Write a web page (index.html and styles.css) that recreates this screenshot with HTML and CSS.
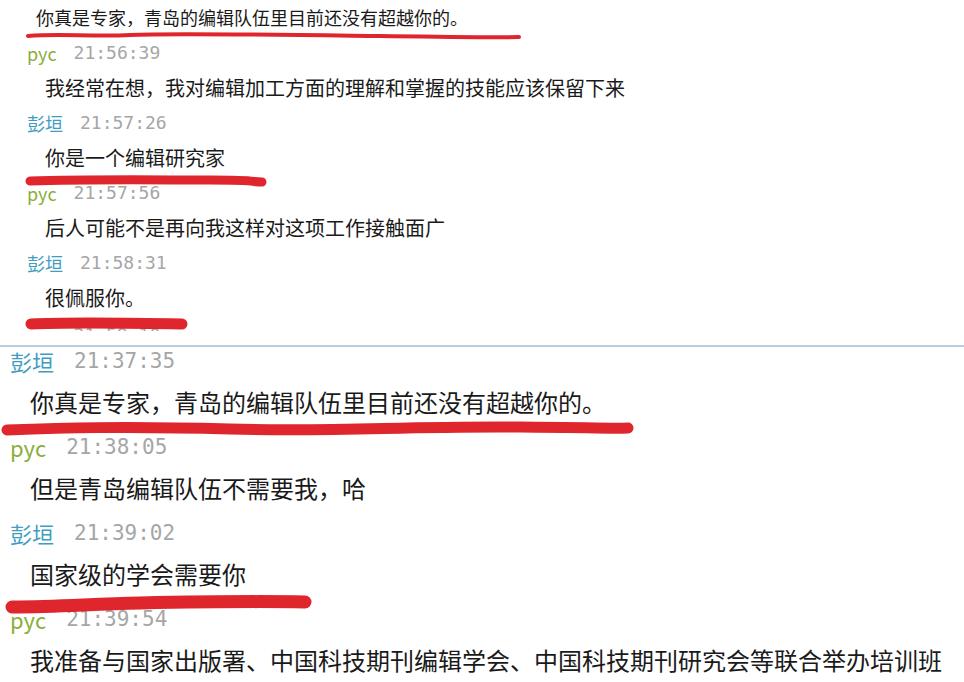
FILE: index.html
```html
<!DOCTYPE html>
<html lang="zh-CN">
<head>
    <meta charset="UTF-8">
    <title>聊天记录</title>
    <link rel="stylesheet" href="styles.css">
</head>
<body>
    <div class="page">
        <div class="log log-small">
            <p class="msg first">你真是专家，青岛的编辑队伍里目前还没有超越你的。</p>

            <div class="head"><span class="name pyc">pyc</span><span class="time">21:56:39</span></div>
            <p class="msg">我经常在想，我对编辑加工方面的理解和掌握的技能应该保留下来</p>

            <div class="head"><span class="name peng">彭垣</span><span class="time">21:57:26</span></div>
            <p class="msg">你是一个编辑研究家</p>

            <div class="head"><span class="name pyc">pyc</span><span class="time">21:57:56</span></div>
            <p class="msg">后人可能不是再向我这样对这项工作接触面广</p>

            <div class="head"><span class="name peng">彭垣</span><span class="time">21:58:31</span></div>
            <p class="msg">很佩服你。</p>

            <div class="cut">
                <div class="head"><span class="name pyc">pyc</span><span class="time">21:59:10</span></div>
            </div>
        </div>

        <div class="log log-large">
            <div class="head"><span class="name peng">彭垣</span><span class="time">21:37:35</span></div>
            <p class="msg">你真是专家，青岛的编辑队伍里目前还没有超越你的。</p>

            <div class="head"><span class="name pyc">pyc</span><span class="time">21:38:05</span></div>
            <p class="msg">但是青岛编辑队伍不需要我，哈</p>

            <div class="head"><span class="name peng">彭垣</span><span class="time">21:39:02</span></div>
            <p class="msg">国家级的学会需要你</p>

            <div class="head"><span class="name pyc">pyc</span><span class="time">21:39:54</span></div>
            <p class="msg">我准备与国家出版署、中国科技期刊编辑学会、中国科技期刊研究会等联合举办培训班</p>
        </div>

        <!-- red pen marks drawn over the screenshot -->
        <svg class="marks" width="964" height="682" viewBox="0 0 964 682">
            <path d="M28 36 C60 33 90 37 130 35 S300 35 380 36 S480 38 519 37" stroke-width="4"/>
            <path d="M30 181 C90 179 160 180 210 180 S250 182 262 182" stroke-width="9"/>
            <path d="M31 324 C70 322 120 323 182 324" stroke-width="11"/>
            <path d="M7 430 C60 428 120 426 230 429 S400 426 520 427 S600 429 628 428" stroke-width="11"/>
            <path d="M12 607 C60 607 90 604 140 603 S250 601 305 602" stroke-width="13"/>
        </svg>
    </div>
</body>
</html>
```

FILE: styles.css
```css
body {
    margin: 0;
    background: #fff;
    font-family: "Noto Sans CJK SC", "Microsoft YaHei", sans-serif;
    color: #1a1a1a;
}
.page {
    position: relative;
    width: 964px;
    height: 682px;
    overflow: hidden;
}
.log {
    display: flex;
    flex-direction: column;
}
.msg {
    margin: 0;
    white-space: nowrap;
}
.head {
    display: flex;
    align-items: center;
}
.name {
    font-family: "Noto Sans CJK SC", "Microsoft YaHei", sans-serif;
}
.pyc {
    color: #8cae3c;
}
.peng {
    color: #3f9ec0;
}
.time {
    font-family: "DejaVu Sans Mono", monospace;
    color: #a6a6a6;
}

/* upper, smaller capture */
.log-small {
    height: 345px;
    border-bottom: 2px solid #b9cce0;
    padding-left: 27px;
}
.log-small .msg {
    height: 35px;
    line-height: 35px;
    font-size: 20px;
    padding-left: 18px;
}
.log-small .msg.first {
    font-size: 18px;
    padding-left: 9px;
}
.log-small .head {
    height: 35px;
    font-size: 18px;
}
.log-small .time {
    font-size: 18px;
    margin-left: 17px;
}
.cut {
    height: 14px;
    overflow: hidden;
    padding-top: 2px;
}

/* lower, larger capture */
.log-large {
    padding-left: 10px;
}
.log-large .head {
    height: 28px;
    font-size: 22px;
}
.log-large .time {
    font-size: 21px;
    margin-left: 20px;
}
.log-large .msg {
    height: 54px;
    line-height: 54px;
    padding-bottom: 4px;
    padding-left: 20px;
    font-size: 24px;
}

.marks {
    position: absolute;
    left: 0;
    top: 0;
}
.marks path {
    fill: none;
    stroke: #de1a22;
    stroke-linecap: round;
    opacity: 0.95;
}
```
